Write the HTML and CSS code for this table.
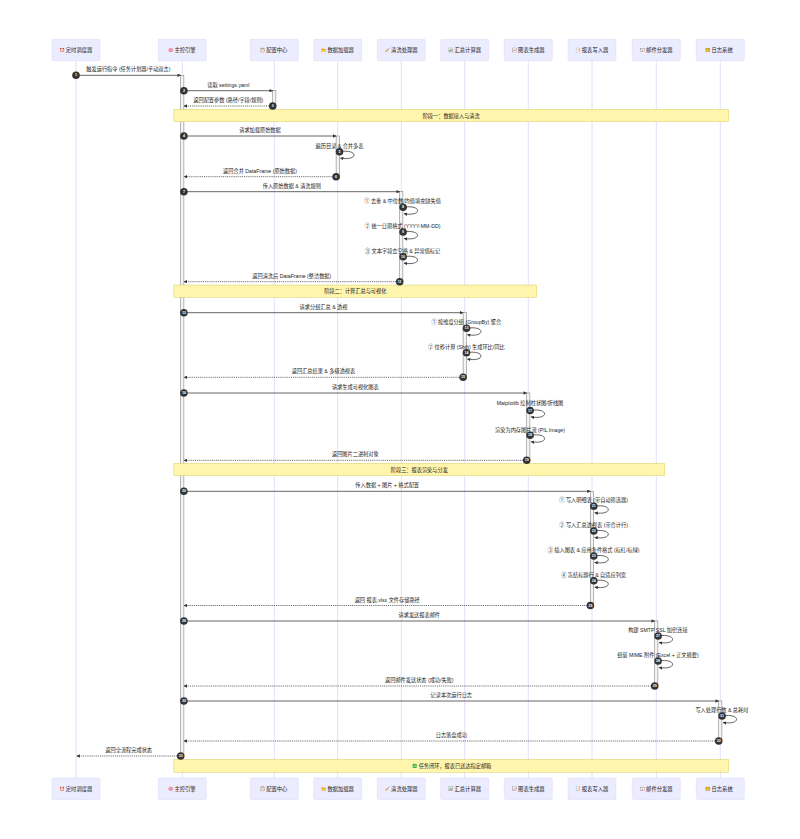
FILE: index.html
```html
<!DOCTYPE html>
<html lang="zh">
<head>
<meta charset="utf-8">
<title>报表自动化流程时序图</title>
<link rel="stylesheet" href="styles.css">
</head>
<body>
<main class="canvas">
<svg class="diagram" viewBox="0 0 800 839" width="800" height="839" xmlns="http://www.w3.org/2000/svg">
<defs>
  <marker id="ah" viewBox="0 0 10 10" refX="9.5" refY="5" markerWidth="3.4" markerHeight="3.4" markerUnits="userSpaceOnUse" orient="auto">
    <path d="M0 0 L10 5 L0 10 z" fill="#333"/>
  </marker>
  <symbol id="ic-clock" viewBox="0 0 10 10">
    <circle cx="1.9" cy="2" r="1.5" fill="#d93a2e"/><circle cx="8.1" cy="2" r="1.5" fill="#d93a2e"/>
    <circle cx="5" cy="5.6" r="4.1" fill="#e8473b"/><circle cx="5" cy="5.6" r="2.9" fill="#fff"/>
    <path d="M5 3.7V5.8H6.6" stroke="#333" stroke-width=".8" fill="none"/>
  </symbol>
  <symbol id="ic-brain" viewBox="0 0 10 10">
    <ellipse cx="5" cy="5.2" rx="4.6" ry="3.7" fill="#f7a3b6" stroke="#d6607f" stroke-width=".6"/>
    <path d="M5 1.6v7.2M2.4 3.8c1 .6 1.4 1.6.9 2.6M7.6 3.8c-1 .6-1.4 1.6-.9 2.6" stroke="#d6607f" stroke-width=".5" fill="none"/>
  </symbol>
  <symbol id="ic-clip" viewBox="0 0 10 10">
    <rect x="1.6" y="1.2" width="6.8" height="8.3" rx=".6" fill="#c9a06a" stroke="#6b5535" stroke-width=".6"/>
    <rect x="2.5" y="2.2" width="5" height="6.6" fill="#fff"/>
    <rect x="3.3" y=".4" width="3.4" height="1.8" rx=".4" fill="#777"/>
    <path d="M3.3 4h3.4M3.3 5.5h3.4M3.3 7h3.4" stroke="#888" stroke-width=".5"/>
  </symbol>
  <symbol id="ic-folder" viewBox="0 0 10 10">
    <path d="M.5 2.2h3.5l1 1h4.5v5.6h-9z" fill="#e0991a"/>
    <path d="M1.6 4.4h8.2l-1.1 4.4H.5z" fill="#f9cd4a"/>
  </symbol>
  <symbol id="ic-broom" viewBox="0 0 10 10">
    <path d="M9.3.7 4.9 5.1" stroke="#8b5a2b" stroke-width="1.1"/>
    <path d="M4.2 4.1 6 5.9 3.4 9.2.4 9.6.9 6.6z" fill="#e9b44c"/>
    <path d="M4.2 4.1 6 5.9" stroke="#c0392b" stroke-width=".9"/>
  </symbol>
  <symbol id="ic-bar" viewBox="0 0 10 10">
    <rect x=".8" y=".8" width="8.4" height="8.4" fill="#f4f4f4" stroke="#777" stroke-width=".7"/>
    <rect x="2" y="5" width="1.6" height="3.4" fill="#3b8ee0"/>
    <rect x="4.2" y="2.4" width="1.6" height="6" fill="#4caf50"/>
    <rect x="6.4" y="4" width="1.6" height="4.4" fill="#e55"/>
  </symbol>
  <symbol id="ic-line" viewBox="0 0 10 10">
    <rect x=".8" y=".8" width="8.4" height="8.4" fill="#f4f4f4" stroke="#777" stroke-width=".7"/>
    <path d="M1.8 7.6 4 5 5.8 6.3 8.4 2.4" stroke="#e53935" stroke-width=".9" fill="none"/>
  </symbol>
  <symbol id="ic-memo" viewBox="0 0 10 10">
    <rect x=".9" y="1" width="6.8" height="8.4" fill="#fff" stroke="#777" stroke-width=".6"/>
    <path d="M2.2 3.4h3.6M2.2 5h3.2M2.2 6.6h3.6" stroke="#999" stroke-width=".5"/>
    <path d="M9.4 1.2 5.6 6.2" stroke="#f0a020" stroke-width="1.2"/>
    <path d="M5.6 6.2 5.2 7.2 6.1 6.6z" fill="#333"/>
  </symbol>
  <symbol id="ic-mail" viewBox="0 0 10 10">
    <rect x=".5" y="1.8" width="9" height="6.4" fill="#fff" stroke="#666" stroke-width=".7"/>
    <path d="M.8 2.2 5 5.4 9.2 2.2" stroke="#888" stroke-width=".55" fill="none"/>
    <rect x="4" y="5.6" width="2" height="1.5" fill="#d33"/>
  </symbol>
  <symbol id="ic-log" viewBox="0 0 10 10">
    <rect x=".5" y="2" width="9" height="6.2" rx=".6" fill="#f4c430" stroke="#7a5c00" stroke-width=".7"/>
    <rect x="1" y="2.5" width="8" height="1.4" fill="#c99700"/>
  </symbol>
  <symbol id="ic-check" viewBox="0 0 10 10">
    <rect x=".3" y=".3" width="9.4" height="9.4" rx="1.4" fill="#3cb64b"/>
    <path d="M2.3 5.2 4.2 7.1 7.8 2.9" stroke="#fff" stroke-width="1.4" fill="none"/>
  </symbol>

  <g id="actors">
    <rect class="actor" x="52" y="39.3" width="48" height="21.4" rx="1"/>
    <use href="#ic-clock" x="59.6" y="47.5" width="5" height="5"/>
    <text class="atxt" x="65.8" y="50">定时调度器</text>

    <rect class="actor" x="158.3" y="39.3" width="48" height="21.4" rx="1"/>
    <use href="#ic-brain" x="168.2" y="47.5" width="5" height="5"/>
    <text class="atxt" x="174.4" y="50">主控引擎</text>

    <rect class="actor" x="250.3" y="39.3" width="48" height="21.4" rx="1"/>
    <use href="#ic-clip" x="260" y="47.5" width="5" height="5"/>
    <text class="atxt" x="266.2" y="50">配置中心</text>

    <rect class="actor" x="313.7" y="39.3" width="48" height="21.4" rx="1"/>
    <use href="#ic-folder" x="321.2" y="47.5" width="5" height="5"/>
    <text class="atxt" x="327.4" y="50">数据加载器</text>

    <rect class="actor" x="377.3" y="39.3" width="48" height="21.4" rx="1"/>
    <use href="#ic-broom" x="384.9" y="47.5" width="5" height="5"/>
    <text class="atxt" x="391.1" y="50">清洗处理器</text>

    <rect class="actor" x="440.7" y="39.3" width="48" height="21.4" rx="1"/>
    <use href="#ic-bar" x="448.3" y="47.5" width="5" height="5"/>
    <text class="atxt" x="454.5" y="50">汇总计算器</text>

    <rect class="actor" x="504.3" y="39.3" width="48" height="21.4" rx="1"/>
    <use href="#ic-line" x="511.9" y="47.5" width="5" height="5"/>
    <text class="atxt" x="518.1" y="50">图表生成器</text>

    <rect class="actor" x="568" y="39.3" width="48" height="21.4" rx="1"/>
    <use href="#ic-memo" x="575.6" y="47.5" width="5" height="5"/>
    <text class="atxt" x="581.8" y="50">报表写入器</text>

    <rect class="actor" x="632.3" y="39.3" width="48" height="21.4" rx="1"/>
    <use href="#ic-mail" x="639.9" y="47.5" width="5" height="5"/>
    <text class="atxt" x="646.1" y="50">邮件分发器</text>

    <rect class="actor" x="696.3" y="39.3" width="48" height="21.4" rx="1"/>
    <use href="#ic-log" x="705.3" y="47.5" width="5" height="5"/>
    <text class="atxt" x="711.5" y="50">日志系统</text>
  </g>
</defs>

<!-- lifelines -->
<g class="lifelines">
  <line class="life" x1="76" y1="60.7" x2="76" y2="778"/>
  <line class="life" x1="182.3" y1="60.7" x2="182.3" y2="778"/>
  <line class="life" x1="274.3" y1="60.7" x2="274.3" y2="778"/>
  <line class="life" x1="337.7" y1="60.7" x2="337.7" y2="778"/>
  <line class="life" x1="401.3" y1="60.7" x2="401.3" y2="778"/>
  <line class="life" x1="464.7" y1="60.7" x2="464.7" y2="778"/>
  <line class="life" x1="528.3" y1="60.7" x2="528.3" y2="778"/>
  <line class="life" x1="592" y1="60.7" x2="592" y2="778"/>
  <line class="life" x1="656.3" y1="60.7" x2="656.3" y2="778"/>
  <line class="life" x1="720.3" y1="60.7" x2="720.3" y2="778"/>
</g>

<use href="#actors"/>
<use href="#actors" transform="translate(0 738.7)"/>

<!-- activations -->
<g class="activations">
  <rect class="act" x="180.7" y="75.3" width="3.2" height="680.7"/>
  <rect class="act" x="272.7" y="90.7" width="3.2" height="15.3"/>
  <rect class="act" x="336.1" y="136" width="3.2" height="40.7"/>
  <rect class="act" x="399.7" y="191.7" width="3.2" height="90"/>
  <rect class="act" x="463.1" y="312.7" width="3.2" height="64.6"/>
  <rect class="act" x="526.7" y="393" width="3.2" height="67.3"/>
  <rect class="act" x="590.4" y="491.3" width="3.2" height="114.2"/>
  <rect class="act" x="654.7" y="621" width="3.2" height="65"/>
  <rect class="act" x="718.7" y="701" width="3.2" height="40"/>
</g>

<!-- messages -->
<g class="messages">
  <line class="msg" x1="76" y1="75.3" x2="180.7" y2="75.3"/>
  <text class="lbl" x="128.4" y="69.3">触发运行指令 (任务计划器/手动双击)</text>

  <line class="msg" x1="183.9" y1="90.7" x2="272.7" y2="90.7"/>
  <text class="lbl" x="228.3" y="84.5">读取 settings.yaml</text>

  <line class="msg dash" x1="272.7" y1="106" x2="183.9" y2="106"/>
  <text class="lbl" x="228.3" y="100">返回配置参数 (路径/字段/规则)</text>

  <line class="msg" x1="183.9" y1="136" x2="336.1" y2="136"/>
  <text class="lbl" x="260" y="130.4">请求加载原始数据</text>

  <path class="msg" d="M339.5 151.7C358.7 148.5 358.7 161.3 340.3 158.1"/>
  <text class="lbl" x="339.5" y="145.7">遍历目录 &amp; 合并多表</text>

  <line class="msg dash" x1="336.1" y1="176.7" x2="183.9" y2="176.7"/>
  <text class="lbl" x="260" y="170.7">返回合并 DataFrame (原始数据)</text>

  <line class="msg" x1="183.9" y1="191.7" x2="399.7" y2="191.7"/>
  <text class="lbl" x="291.8" y="185.8">传入原始数据 &amp; 清洗规则</text>

  <path class="msg" d="M403.1 207.3C422.3 204.1 422.3 216.9 403.9 213.7"/>
  <text class="lbl" x="402.6" y="201.3">① 去重 &amp; 中位数/均值填充缺失值</text>

  <path class="msg" d="M403.1 232C422.3 228.8 422.3 241.6 403.9 238.4"/>
  <text class="lbl" x="402.6" y="226.3">② 统一日期格式 (YYYY-MM-DD)</text>

  <path class="msg" d="M403.1 256.7C422.3 253.5 422.3 266.3 403.9 263.1"/>
  <text class="lbl" x="402.6" y="250.8">③ 文本字段去空格 &amp; 异常值标记</text>

  <line class="msg dash" x1="399.7" y1="281.7" x2="183.9" y2="281.7"/>
  <text class="lbl" x="291.8" y="275.7">返回清洗后 DataFrame (整洁数据)</text>

  <line class="msg" x1="183.9" y1="312.7" x2="463.1" y2="312.7"/>
  <text class="lbl" x="323.5" y="306.7">请求分组汇总 &amp; 透视</text>

  <path class="msg" d="M466.5 328.3C485.7 325.1 485.7 337.9 467.3 334.7"/>
  <text class="lbl" x="466.3" y="322.2">① 按维度分组 (GroupBy) 聚合</text>

  <path class="msg" d="M466.5 352.7C485.7 349.5 485.7 362.3 467.3 359.1"/>
  <text class="lbl" x="466.3" y="346.7">② 位移计算 (Shift) 生成环比/同比</text>

  <line class="msg dash" x1="463.1" y1="377.3" x2="183.9" y2="377.3"/>
  <text class="lbl" x="323.5" y="371.3">返回汇总结果 &amp; 多级透视表</text>

  <line class="msg" x1="183.9" y1="393" x2="526.7" y2="393"/>
  <text class="lbl" x="355.3" y="387">请求生成可视化图表</text>

  <path class="msg" d="M530.1 410.5C549.3 407.3 549.3 420.1 530.9 416.9"/>
  <text class="lbl" x="530" y="402.6">Matplotlib 绘制柱状图/折线图</text>

  <path class="msg" d="M530.1 435.3C549.3 432.1 549.3 444.9 530.9 441.7"/>
  <text class="lbl" x="530" y="429.6">渲染为内存图片流 (PIL Image)</text>

  <line class="msg dash" x1="526.7" y1="460.3" x2="183.9" y2="460.3"/>
  <text class="lbl" x="355.3" y="454.2">返回图片二进制对象</text>

  <line class="msg" x1="183.9" y1="491.3" x2="590.4" y2="491.3"/>
  <text class="lbl" x="387.2" y="485.2">传入数据 + 图片 + 格式配置</text>

  <path class="msg" d="M593.8 506.3C613 503.1 613 515.9 594.6 512.7"/>
  <text class="lbl" x="593.6" y="500.4">① 写入明细表 (带自动筛选器)</text>

  <path class="msg" d="M593.8 531C613 527.8 613 540.6 594.6 537.4"/>
  <text class="lbl" x="593.6" y="525.2">② 写入汇总透视表 (带合计行)</text>

  <path class="msg" d="M593.8 556C613 552.8 613 565.6 594.6 562.4"/>
  <text class="lbl" x="593.6" y="550">③ 插入图表 &amp; 应用条件格式 (标红/标绿)</text>

  <path class="msg" d="M593.8 580.7C613 577.5 613 590.3 594.6 587.1"/>
  <text class="lbl" x="593.6" y="574.7">④ 冻结标题行 &amp; 自适应列宽</text>

  <line class="msg dash" x1="590.4" y1="605.5" x2="183.9" y2="605.5"/>
  <text class="lbl" x="387.2" y="599.6">返回 报表.xlsx 文件存储路径</text>

  <line class="msg" x1="183.9" y1="621" x2="654.7" y2="621"/>
  <text class="lbl" x="419.3" y="615">请求发送报表邮件</text>

  <path class="msg" d="M658.1 636C677.3 632.8 677.3 645.6 658.9 642.4"/>
  <text class="lbl" x="657.9" y="630.3">构建 SMTP SSL 加密连接</text>

  <path class="msg" d="M658.1 661C677.3 657.8 677.3 670.6 658.9 667.4"/>
  <text class="lbl" x="657.9" y="655">组装 MIME 附件 (Excel + 正文摘要)</text>

  <line class="msg dash" x1="654.7" y1="686" x2="183.9" y2="686"/>
  <text class="lbl" x="419.3" y="680">返回邮件发送状态 (成功/失败)</text>

  <line class="msg" x1="183.9" y1="701" x2="718.7" y2="701"/>
  <text class="lbl" x="451.3" y="695.3">记录本次运行日志</text>

  <path class="msg" d="M722.1 716C741.3 712.8 741.3 725.6 722.9 722.4"/>
  <text class="lbl" x="721.9" y="710.3">写入处理行数 &amp; 总耗时</text>

  <line class="msg dash" x1="718.7" y1="741" x2="183.9" y2="741"/>
  <text class="lbl" x="451.3" y="735.3">日志落盘成功</text>

  <line class="msg dash" x1="180.7" y1="756" x2="76.6" y2="756"/>
  <text class="lbl" x="128.7" y="750.3">返回全流程完成状态</text>
</g>

<!-- notes -->
<g class="notes">
  <rect class="note" x="173.9" y="109.3" width="554.7" height="12.4"/>
  <text class="ntxt" x="451.2" y="115.5">阶段一：数据接入与清洗</text>

  <rect class="note" x="173.9" y="285" width="362.8" height="12.3"/>
  <text class="ntxt" x="355.3" y="291.2">阶段二：计算汇总与可视化</text>

  <rect class="note" x="173.9" y="463.3" width="490.8" height="12.4"/>
  <text class="ntxt" x="419.3" y="469.5">阶段三：报表渲染与分发</text>

  <rect class="note" x="173.9" y="759.3" width="554.7" height="13"/>
  <use href="#ic-check" x="412.3" y="763.6" width="4.6" height="4.6"/>
  <text class="ntxt" x="455" y="765.9">任务闭环，报表已送达指定邮箱</text>
</g>

<!-- sequence numbers -->
<g class="seqs">
  <circle class="seq" cx="76" cy="75.3" r="3.8"/><text class="seqt" x="76" y="75.4">1</text>
  <circle class="seq" cx="183.9" cy="90.7" r="3.8"/><text class="seqt" x="183.9" y="90.8">2</text>
  <circle class="seq" cx="272.7" cy="106" r="3.8"/><text class="seqt" x="272.7" y="106.1">3</text>
  <circle class="seq" cx="183.9" cy="136" r="3.8"/><text class="seqt" x="183.9" y="136.1">4</text>
  <circle class="seq" cx="339.5" cy="151.7" r="3.8"/><text class="seqt" x="339.5" y="151.8">5</text>
  <circle class="seq" cx="336.1" cy="176.7" r="3.8"/><text class="seqt" x="336.1" y="176.8">6</text>
  <circle class="seq" cx="183.9" cy="191.7" r="3.8"/><text class="seqt" x="183.9" y="191.8">7</text>
  <circle class="seq" cx="403.1" cy="207.3" r="3.8"/><text class="seqt" x="403.1" y="207.4">8</text>
  <circle class="seq" cx="403.1" cy="232" r="3.8"/><text class="seqt" x="403.1" y="232.1">9</text>
  <circle class="seq" cx="403.1" cy="256.7" r="3.8"/><text class="seqt" x="403.1" y="256.8">10</text>
  <circle class="seq" cx="399.7" cy="281.7" r="3.8"/><text class="seqt" x="399.7" y="281.8">11</text>
  <circle class="seq" cx="183.9" cy="312.7" r="3.8"/><text class="seqt" x="183.9" y="312.8">12</text>
  <circle class="seq" cx="466.5" cy="328.3" r="3.8"/><text class="seqt" x="466.5" y="328.4">13</text>
  <circle class="seq" cx="466.5" cy="352.7" r="3.8"/><text class="seqt" x="466.5" y="352.8">14</text>
  <circle class="seq" cx="463.1" cy="377.3" r="3.8"/><text class="seqt" x="463.1" y="377.4">15</text>
  <circle class="seq" cx="183.9" cy="393" r="3.8"/><text class="seqt" x="183.9" y="393.1">16</text>
  <circle class="seq" cx="530.1" cy="410.5" r="3.8"/><text class="seqt" x="530.1" y="410.6">17</text>
  <circle class="seq" cx="530.1" cy="435.3" r="3.8"/><text class="seqt" x="530.1" y="435.4">18</text>
  <circle class="seq" cx="526.7" cy="460.3" r="3.8"/><text class="seqt" x="526.7" y="460.4">19</text>
  <circle class="seq" cx="183.9" cy="491.3" r="3.8"/><text class="seqt" x="183.9" y="491.4">20</text>
  <circle class="seq" cx="593.8" cy="506.3" r="3.8"/><text class="seqt" x="593.8" y="506.4">21</text>
  <circle class="seq" cx="593.8" cy="531" r="3.8"/><text class="seqt" x="593.8" y="531.1">22</text>
  <circle class="seq" cx="593.8" cy="556" r="3.8"/><text class="seqt" x="593.8" y="556.1">23</text>
  <circle class="seq" cx="593.8" cy="580.7" r="3.8"/><text class="seqt" x="593.8" y="580.8">24</text>
  <circle class="seq" cx="590.4" cy="605.5" r="3.8"/><text class="seqt" x="590.4" y="605.6">25</text>
  <circle class="seq" cx="183.9" cy="621" r="3.8"/><text class="seqt" x="183.9" y="621.1">26</text>
  <circle class="seq" cx="658.1" cy="636" r="3.8"/><text class="seqt" x="658.1" y="636.1">27</text>
  <circle class="seq" cx="658.1" cy="661" r="3.8"/><text class="seqt" x="658.1" y="661.1">28</text>
  <circle class="seq" cx="654.7" cy="686" r="3.8"/><text class="seqt" x="654.7" y="686.1">29</text>
  <circle class="seq" cx="183.9" cy="701" r="3.8"/><text class="seqt" x="183.9" y="701.1">30</text>
  <circle class="seq" cx="722.1" cy="716" r="3.8"/><text class="seqt" x="722.1" y="716.1">31</text>
  <circle class="seq" cx="718.7" cy="741" r="3.8"/><text class="seqt" x="718.7" y="741.1">32</text>
  <circle class="seq" cx="180.7" cy="756" r="3.8"/><text class="seqt" x="180.7" y="756.1">33</text>
</g>
</svg>
</main>
</body>
</html>
```
FILE: styles.css
```css
html, body {
  margin: 0;
  padding: 0;
  background: #ffffff;
}

.canvas {
  display: block;
  width: 800px;
  height: 839px;
  overflow: hidden;
}

.diagram {
  display: block;
}

.actor {
  fill: #ececff;
  stroke: #d9d0f4;
  stroke-width: 0.4;
}

.atxt {
  font-family: "Liberation Sans", "Noto Sans CJK SC", sans-serif;
  font-size: 5.3px;
  fill: #222222;
  dominant-baseline: central;
}

.life {
  stroke: #dad3f6;
  stroke-width: 0.75;
}

.act {
  fill: #f4f4f4;
  stroke: #707070;
  stroke-width: 0.5;
}

.msg {
  stroke: #333333;
  stroke-width: 0.75;
  fill: none;
  marker-end: url(#ah);
}

.dash {
  stroke-dasharray: 1 0.9;
}

.lbl {
  font-family: "Liberation Sans", "Noto Sans CJK SC", sans-serif;
  font-size: 5.2px;
  fill: #222222;
  text-anchor: middle;
  dominant-baseline: central;
}

.note {
  fill: #fff5ad;
  stroke: #c8c34a;
  stroke-width: 0.4;
}

.ntxt {
  font-family: "Liberation Sans", "Noto Sans CJK SC", sans-serif;
  font-size: 5.2px;
  fill: #222222;
  text-anchor: middle;
  dominant-baseline: central;
}

.seq {
  fill: #333333;
}

.seqt {
  font-family: "Liberation Sans", sans-serif;
  font-size: 3.6px;
  font-weight: bold;
  fill: #ffffff;
  text-anchor: middle;
  dominant-baseline: central;
}
```
